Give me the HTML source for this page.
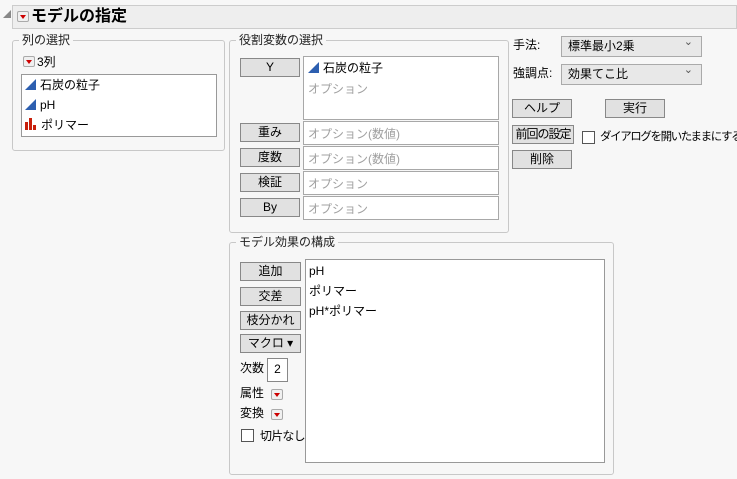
<!DOCTYPE html>
<html><head><meta charset="utf-8"><style>
*{box-sizing:border-box;margin:0;padding:0}
body{width:737px;height:479px;background:#f7f7f7;font-family:"Liberation Sans","Noto Sans CJK JP",sans-serif;font-size:12px;color:#000;position:relative;overflow:hidden}
.a{position:absolute;white-space:nowrap}
.grp{position:absolute;border:1px solid #c8c8c8;border-radius:3px}
.lg{position:absolute;top:-9px;left:6px;background:#f7f7f7;padding:0 3px;font-size:12px;line-height:16px;color:#222}
.btn{position:absolute;background:#e1e1e1;border:1px solid #888;text-align:center;font-size:12px;line-height:16px;white-space:nowrap}
.box{position:absolute;background:#fff;border:1px solid #a8a8a8}
.ph{color:#a0a0a0}
.rb{position:absolute;width:12px;height:11px;border:1px solid #aaa;border-radius:2px;background:#f0f0f0}
.rb:after{content:"";position:absolute;left:2px;top:3px;border-left:3px solid transparent;border-right:3px solid transparent;border-top:4px solid #c00}
.tri{display:inline-block;width:0;height:0;border-left:11px solid transparent;border-bottom:11px solid #2d5fb0;vertical-align:-1px;margin-right:4px}
.cb{position:absolute;width:13px;height:13px;border:1px solid #333;background:#fff}
.dd{position:absolute;background:#e8e8e8;border:1px solid #aaa;padding-left:6px;line-height:19px}
.dd:after{content:"⌄";position:absolute;right:8px;top:-4px;font-size:11px;color:#555}
.bars{display:inline-block;position:relative;width:12px;height:12px;margin-right:4px;vertical-align:-1px}
.bars i{position:absolute;bottom:0;width:3px;background:#c8200c}
</style></head><body>
<div class="a" style="left:3px;top:10px;width:0;height:0;border-left:8px solid transparent;border-bottom:8px solid #888"></div>
<div class="a" style="left:12px;top:5px;width:725px;height:24px;background:#eeeeee;border:1px solid #ccc"></div>
<div class="rb" style="left:17px;top:11px"></div>
<div class="a" style="left:31px;top:7px;font-size:16px;font-weight:bold;line-height:19px">モデルの指定</div>

<div class="grp" style="left:12px;top:40px;width:213px;height:111px"><div class="lg">列の選択</div></div>
<div class="rb" style="left:23px;top:56px"></div>
<div class="a" style="left:37px;top:55px;line-height:14px">3列</div>
<div class="box" style="left:21px;top:74px;width:196px;height:63px;border-color:#999"></div>
<div class="a" style="left:25px;top:77px;line-height:16px"><span class="tri"></span>石炭の粒子</div>
<div class="a" style="left:25px;top:97px;line-height:16px"><span class="tri"></span>pH</div>
<div class="a" style="left:25px;top:117px;line-height:16px"><span class="bars"><i style="left:0;height:8px"></i><i style="left:4px;height:12px"></i><i style="left:8px;height:5px"></i></span>ポリマー</div>

<div class="grp" style="left:229px;top:40px;width:280px;height:193px"><div class="lg">役割変数の選択</div></div>
<div class="btn" style="left:240px;top:58px;width:60px;height:19px">Y</div>
<div class="box" style="left:303px;top:56px;width:196px;height:64px"></div>
<div class="a" style="left:308px;top:60px;line-height:16px"><span class="tri"></span>石炭の粒子</div>
<div class="a ph" style="left:308px;top:81px;line-height:16px">オプション</div>
<div class="btn" style="left:240px;top:123px;width:60px;height:19px">重み</div>
<div class="box ph" style="left:303px;top:121px;width:196px;height:24px;padding:3px 4px">オプション(数値)</div>
<div class="btn" style="left:240px;top:148px;width:60px;height:19px">度数</div>
<div class="box ph" style="left:303px;top:146px;width:196px;height:24px;padding:3px 4px">オプション(数値)</div>
<div class="btn" style="left:240px;top:173px;width:60px;height:19px">検証</div>
<div class="box ph" style="left:303px;top:171px;width:196px;height:24px;padding:3px 4px">オプション</div>
<div class="btn" style="left:240px;top:198px;width:60px;height:19px">By</div>
<div class="box ph" style="left:303px;top:196px;width:196px;height:24px;padding:3px 4px">オプション</div>

<div class="a" style="left:513px;top:37px;line-height:16px">手法:</div>
<div class="dd" style="left:561px;top:36px;width:141px;height:21px">標準最小2乗</div>
<div class="a" style="left:513px;top:65px;line-height:16px">強調点:</div>
<div class="dd" style="left:561px;top:64px;width:141px;height:21px">効果てこ比</div>
<div class="btn" style="left:512px;top:99px;width:60px;height:19px">ヘルプ</div>
<div class="btn" style="left:605px;top:99px;width:60px;height:19px">実行</div>
<div class="btn" style="left:512px;top:125px;width:62px;height:19px;letter-spacing:-1px">前回の設定</div>
<div class="cb" style="left:582px;top:131px;border-color:#555"></div>
<div class="a" style="left:600px;top:129px;line-height:16px;font-size:11.5px;letter-spacing:-1.4px">ダイアログを開いたままにする</div>
<div class="btn" style="left:512px;top:150px;width:60px;height:19px">削除</div>

<div class="grp" style="left:229px;top:242px;width:385px;height:233px"><div class="lg">モデル効果の構成</div></div>
<div class="btn" style="left:240px;top:262px;width:61px;height:19px">追加</div>
<div class="btn" style="left:240px;top:287px;width:61px;height:19px">交差</div>
<div class="btn" style="left:240px;top:311px;width:61px;height:19px">枝分かれ</div>
<div class="btn" style="left:240px;top:334px;width:61px;height:19px">マクロ ▾</div>
<div class="a" style="left:240px;top:360px;line-height:16px">次数</div>
<div class="box" style="left:267px;top:358px;width:21px;height:24px;border-color:#888;text-align:center;line-height:21px">2</div>
<div class="a" style="left:240px;top:385px;line-height:16px">属性</div>
<div class="rb" style="left:271px;top:389px"></div>
<div class="a" style="left:240px;top:405px;line-height:16px">変換</div>
<div class="rb" style="left:271px;top:409px"></div>
<div class="cb" style="left:241px;top:429px;border-color:#555"></div>
<div class="a" style="left:260px;top:428px;line-height:16px;letter-spacing:-0.8px">切片なし</div>
<div class="box" style="left:305px;top:259px;width:300px;height:204px;border-color:#999"></div>
<div class="a" style="left:309px;top:263px;line-height:16px">pH</div>
<div class="a" style="left:309px;top:283px;line-height:16px">ポリマー</div>
<div class="a" style="left:309px;top:303px;line-height:16px">pH*ポリマー</div>
</body></html>
